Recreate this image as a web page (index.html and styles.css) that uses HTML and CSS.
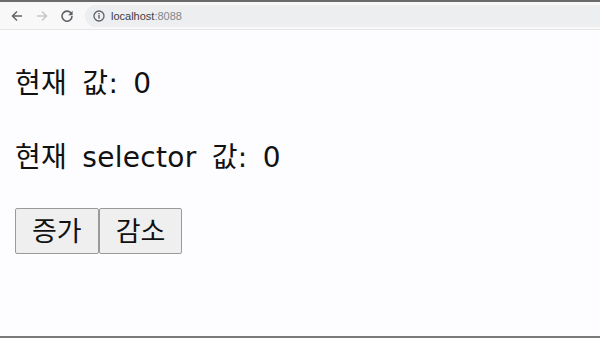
FILE: index.html
```html
<!DOCTYPE html>
<html lang="ko">
<head>
<meta charset="utf-8">
<title>localhost:8088</title>
<link rel="stylesheet" href="styles.css">
</head>
<body>
<div class="window">
  <header class="toolbar">
    <div class="nav">
      <svg class="ic" width="14" height="14" viewBox="0 0 14 14"><path d="M12 7H2.5M7 2.5L2.5 7 7 11.5" fill="none" stroke="#5f6368" stroke-width="1.5"/></svg>
      <svg class="ic" width="14" height="14" viewBox="0 0 14 14"><path d="M2 7h9.5M7 2.5L11.5 7 7 11.5" fill="none" stroke="#c4c6c9" stroke-width="1.5"/></svg>
      <svg class="ic" width="14" height="14" viewBox="0 0 14 14"><path d="M11.3 4.6A5 5 0 1 0 12 7" fill="none" stroke="#5f6368" stroke-width="1.6"/><path d="M12.6 1.8v4.4H8.2z" fill="#5f6368"/></svg>
    </div>
    <div class="omnibox">
      <svg class="info" width="12" height="12" viewBox="0 0 12 12"><circle cx="6" cy="6" r="5" fill="none" stroke="#5f6368" stroke-width="1.3"/><rect x="5.3" y="5" width="1.4" height="3.6" fill="#5f6368"/><rect x="5.3" y="3" width="1.4" height="1.3" fill="#5f6368"/></svg>
      <span class="url">localhost<span class="port">:8088</span></span>
    </div>
  </header>
  <main class="page">
    <p class="line">현재 값: 0</p>
    <p class="line">현재 selector 값: 0</p>
    <div class="buttons">
      <button class="btn">증가</button><button class="btn">감소</button>
    </div>
  </main>
</div>
</body>
</html>
```
FILE: styles.css
```css
html, body {
  margin: 0;
  padding: 0;
  height: 100%;
}
body {
  font-family: "DejaVu Sans", "Noto Sans CJK KR", sans-serif;
  background: #fdfcfe;
}
.window {
  height: 338px;
  box-sizing: border-box;
  border-top: 2px solid #6b6b6b;
  border-bottom: 2px solid #7a7a7a;
  display: flex;
  flex-direction: column;
}
.toolbar {
  height: 28px;
  background: #f8f8f9;
  border-bottom: 1px solid #e6e5e8;
  display: flex;
  align-items: center;
  padding-left: 10px;
  box-sizing: border-box;
}
.nav {
  display: flex;
  gap: 11px;
  align-items: center;
}
.ic {
  display: block;
}
.omnibox {
  margin-left: 11px;
  flex: 1;
  height: 22px;
  background: #edeef0;
  border-radius: 11px 0 0 11px;
  display: flex;
  align-items: center;
  padding-left: 8px;
  gap: 6px;
}
.info { display: block; }
.url {
  font-family: "Liberation Sans", Arial, sans-serif;
  font-size: 11px;
  color: #3c4043;
}
.port { color: #80868b; }
.page {
  flex: 1;
  padding: 0 15px;
}
.line {
  margin: 34px 0 0;
  font-size: 28px;
  line-height: 40px;
  word-spacing: 6px;
  letter-spacing: 0.3px;
  color: #111;
}
.line + .line {
  margin-top: 34px;
}
.buttons {
  margin-top: 30px;
  display: flex;
}
.btn {
  font-family: "DejaVu Sans", "Noto Sans CJK KR", sans-serif;
  font-size: 27px;
  height: 46px;
  padding: 0 16px;
  background: #efefef;
  border: 1px solid #9a9a9a;
  border-radius: 2px;
  color: #111;
  line-height: 1;
}
```
